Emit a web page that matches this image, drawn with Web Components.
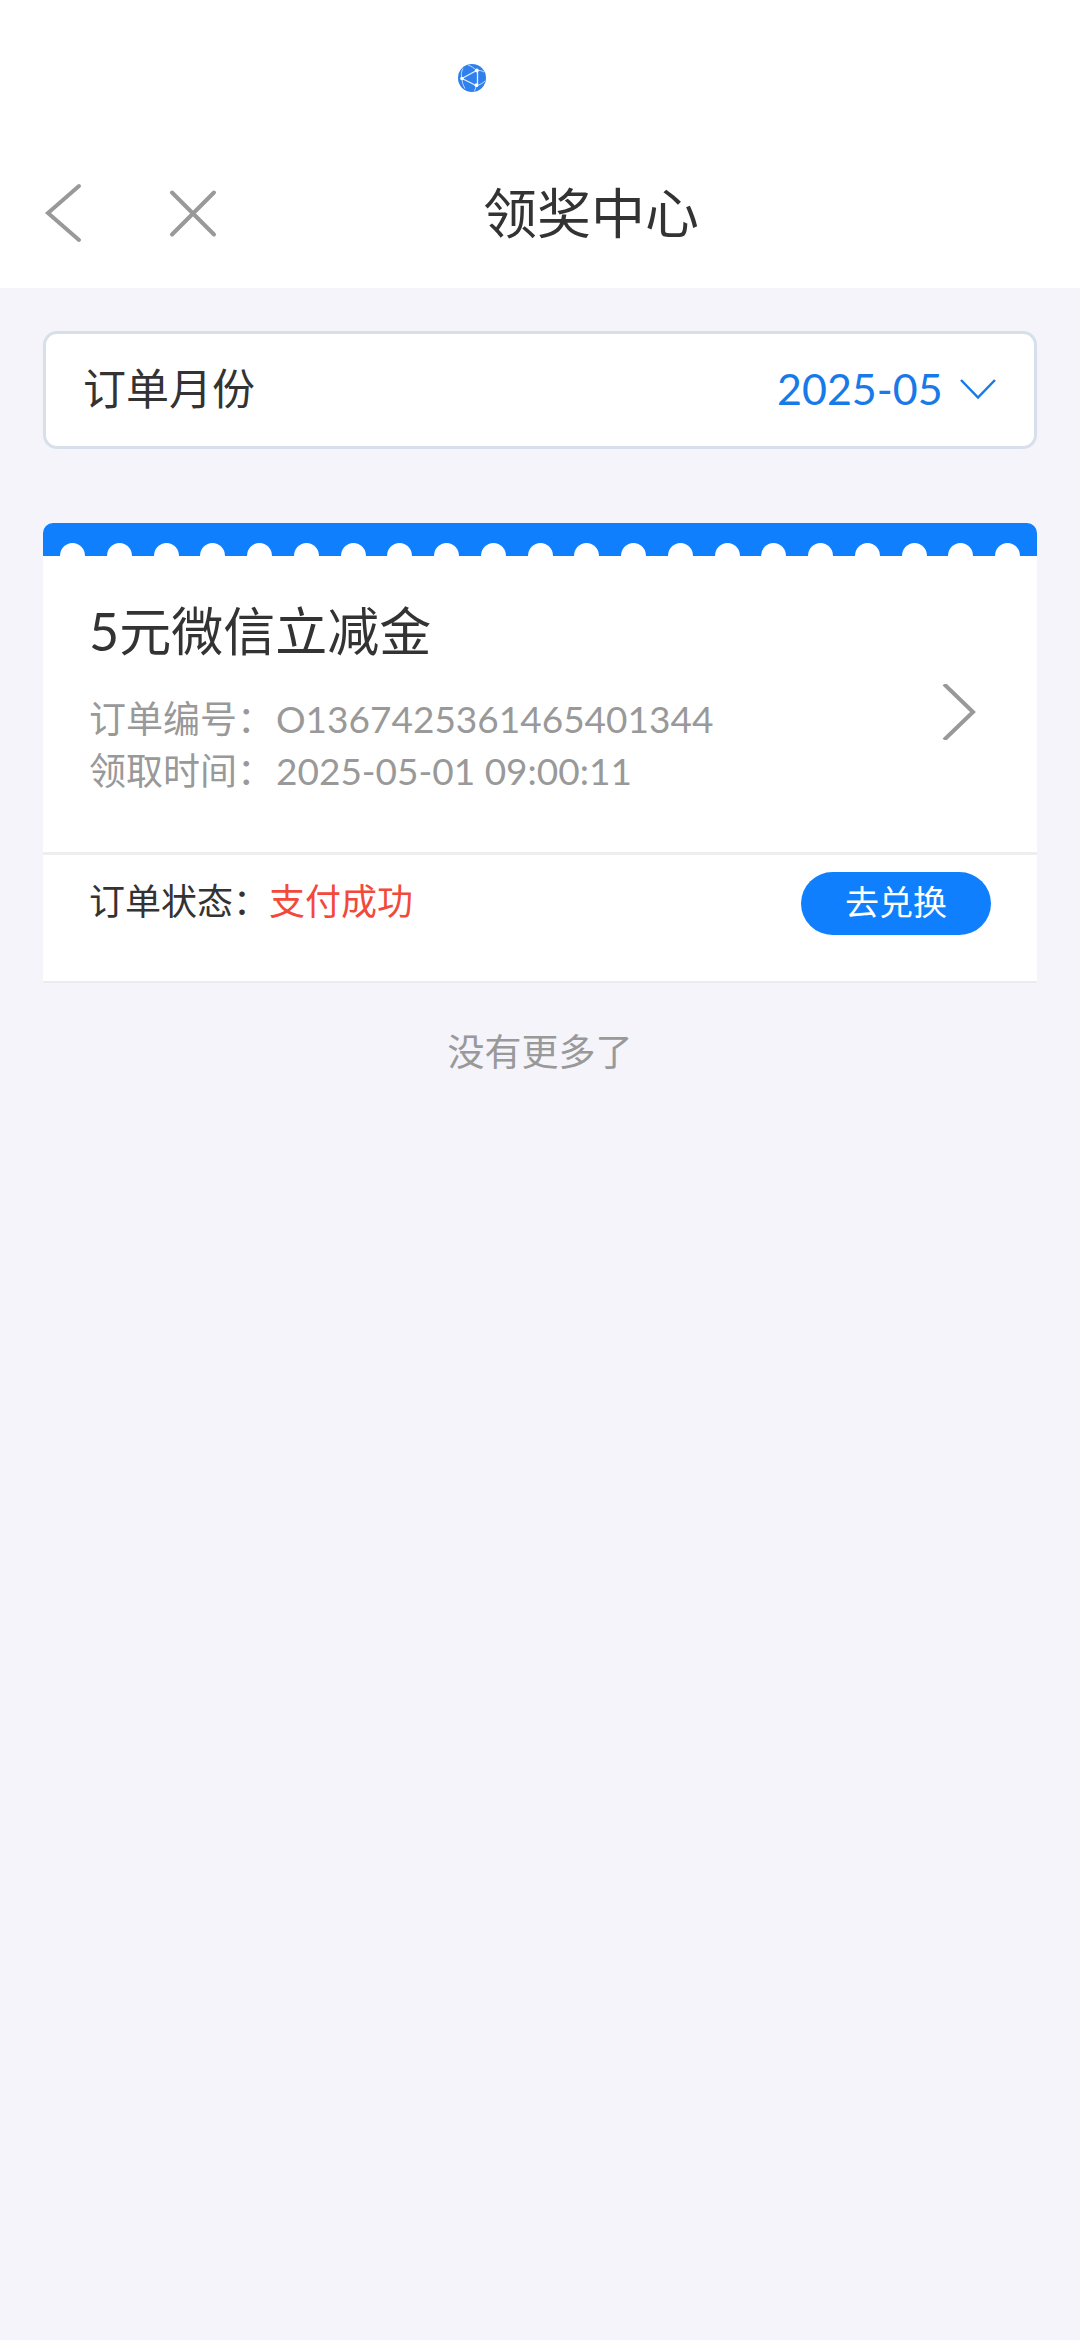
<!DOCTYPE html>
<html lang="zh-CN">
<head>
<meta charset="utf-8">
<meta name="viewport" content="width=device-width, initial-scale=1">
<title>领奖中心</title>
<style>
  html, body { margin: 0; }
  body {
    min-height: 100vh;
    background: #f4f4fa;
    color: #333;
    font-family: Lato, "Noto Sans CJK SC", sans-serif;
  }
</style>
</head>
<body>
<reward-page>
  <status-strip></status-strip>
  <nav-header>领奖中心</nav-header>
  <month-picker value="2025-05">订单月份</month-picker>
  <order-card>
    <span slot="name">5元微信立减金</span>
    <span slot="number">O1367425361465401344</span>
    <span slot="time">2025-05-01 09:00:11</span>
    <span slot="status">支付成功</span>
    <span slot="action">去兑换</span>
  </order-card>
  <list-end>没有更多了</list-end>
</reward-page>

<script>
  const define = (name, html, setup) => {
    const template = document.createElement('template');
    template.innerHTML = html;
    customElements.define(name, class extends HTMLElement {
      constructor() {
        super();
        this.attachShadow({ mode: 'open' }).append(template.content.cloneNode(true));
      }
      connectedCallback() {
        if (setup) setup(this, this.shadowRoot);
      }
    });
  };

  define('reward-page', `
    <style>
      :host { display: flex; flex-direction: column; }
      ::slotted(month-picker) { margin: 43px 43px 0; }
      ::slotted(order-card) { margin: 74px 43px 0; }
      ::slotted(list-end) { margin: 43px; }
    </style>
    <slot></slot>`);

  define('status-strip', `
    <style>
      :host {
        display: flex; justify-content: center; box-sizing: border-box;
        height: 138px; padding: 64px 137px 0 0; background: #fff;
      }
      svg { width: 28px; height: 28px; }
    </style>
    <svg viewBox="0 0 28 28" aria-hidden="true">
      <circle cx="14" cy="14" r="14" fill="#2f80ed"/>
      <g fill="none" stroke="#e3effd" stroke-width="1.3">
        <path d="M4 14.5 18.5 6.5M4 14.5 18 21.5M19.5 6.5V21"/>
        <path stroke-width="0.8" d="M4 14.5C3 11 3 8 5 4.500M4 14.500C4 18 5 21 7 24.500M18.500 6.500C16 4 13 2 10 1M18.500 6.500C22 6 24 7 26 8M18 21.500C22 21 25 19 27 17M18 21.500C18 24 17 26 16 27.500"/>
      </g>
      <g fill="#fff"><circle cx="4" cy="14.500" r="1.800"/><circle cx="18.800" cy="6.500" r="1.900"/><circle cx="18.500" cy="21.200" r="1.900"/></g>
    </svg>`);

  define('nav-header', `
    <style>
      :host { display: flex; align-items: stretch; height: 150px; background: #fff; }
      button {
        display: flex; align-items: center; justify-content: center;
        width: 128px; padding: 0; border: 0; background: none; cursor: pointer;
      }
      svg { width: 60px; height: 60px; fill: none; stroke: #999; stroke-width: 4; stroke-linecap: round; }
      h1 {
        flex: 1; margin: 0; padding: 2px 154px 0 0; text-align: center;
        font-size: 54px; font-weight: 400; line-height: 148px;
      }
    </style>
    <button type="button" aria-label="返回"><svg viewBox="0 0 60 60"><path d="M45 3 14 30 45 57"/></svg></button>
    <button type="button" aria-label="关闭"><svg viewBox="0 0 60 60"><path d="M10 9.500 52 51.500M52 9.500 10 51.500"/></svg></button>
    <h1><slot></slot></h1>`);

  define('month-picker', `
    <style>
      :host {
        display: flex; align-items: center; justify-content: space-between;
        padding: 25px 37px 27px; border: 3px solid #d7dfea; border-radius: 14px; background: #fff;
      }
      label { font-size: 43px; line-height: 60px; }
      .field { display: flex; align-items: center; gap: 16px; color: #187ae8; }
      select {
        appearance: none; height: 60px; margin: 0; padding: 0; border: 0; background: none;
        color: inherit; font-family: inherit; font-size: 43px; line-height: 60px; cursor: pointer;
      }
      svg { width: 38px; height: 22px; fill: none; stroke: currentColor; stroke-width: 2.500; pointer-events: none; }
    </style>
    <label for="month"><slot></slot></label>
    <div class="field">
      <select id="month"></select>
      <svg viewBox="0 0 38 22" aria-hidden="true"><path d="M2 2 19 19.500 36 2"/></svg>
    </div>`, (host, root) => {
      root.querySelector('select').replaceChildren(new Option(host.getAttribute('value')));
    });

  define('ticket-edge', `
    <style>
      :host {
        display: flex; justify-content: space-between; align-items: flex-end;
        height: 33px; padding: 0 17px; background: #107ffd; border-radius: 10px 10px 0 0;
      }
      i { width: 25px; height: 13px; background: #fff; border-radius: 50% 50% 0 0 / 100% 100% 0 0; }
    </style>`, (host, root) => {
      for (let n = 0; n < 21; n++) root.append(document.createElement('i'));
    });

  define('order-card', `
    <style>
      :host { display: block; }
      .main, .foot { display: flex; justify-content: space-between; background: #fff; }
      .main { border-bottom: 3px solid #eee; }
      .info { padding: 39px 0 55px 46px; }
      h2 { margin: 0 0 26px; font-size: 52px; font-weight: 400; line-height: 72px; }
      dl { margin: 0; color: #999; font-size: 37px; line-height: 52px; }
      dl div { display: flex; gap: 2px; }
      dt, dd { margin: 0; }
      .open { padding: 15px 60px 0; border: 0; background: none; cursor: pointer; }
      svg { display: block; width: 36px; height: 56px; fill: none; stroke: #999; stroke-width: 4; }
      .foot { padding: 16px 46px 46px; border-bottom: 2px solid #ececf0; }
      p { margin: 0; font-size: 36px; line-height: 60px; }
      .status { color: #f2493a; }
      .redeem {
        width: 190px; height: 63px; margin-top: 1px; padding: 0 0 4px; border: 0; border-radius: 32px;
        background: #107ffd; color: #fff; font-family: inherit; font-size: 34px; line-height: 58px; cursor: pointer;
      }
    </style>
    <ticket-edge></ticket-edge>
    <div class="main">
      <div class="info">
        <h2><slot name="name"></slot></h2>
        <dl>
          <div><dt>订单编号：</dt><dd><slot name="number"></slot></dd></div>
          <div><dt>领取时间：</dt><dd><slot name="time"></slot></dd></div>
        </dl>
      </div>
      <button class="open" type="button" aria-label="查看订单"><svg viewBox="0 0 36 56"><path d="M3 0 32 28 3 56"/></svg></button>
    </div>
    <div class="foot">
      <p>订单状态：<span class="status"><slot name="status"></slot></span></p>
      <button class="redeem" type="button"><slot name="action"></slot></button>
    </div>`);

  define('list-end', `
    <style>
      :host { display: block; text-align: center; color: #999; font-size: 37px; line-height: 52px; }
    </style>
    <slot></slot>`);
</script>
</body>
</html>
